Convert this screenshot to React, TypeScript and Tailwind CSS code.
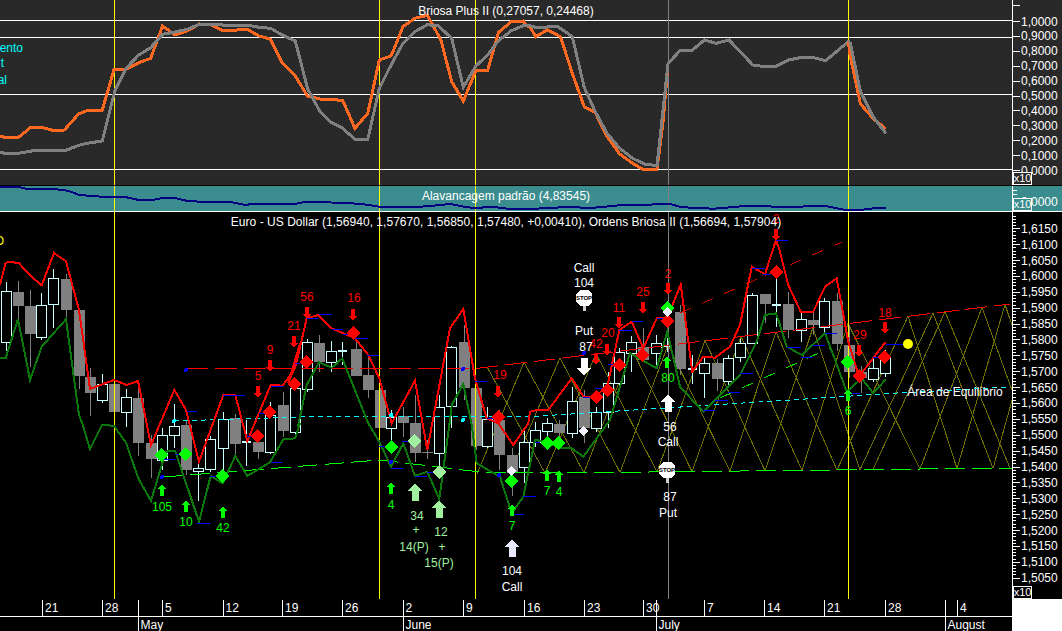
import React from "react";

type Pt = [number, number];

// points were read off 3x crops, so convert back to page coords
const at = (ox: number, oy: number, pts: Pt[], sx = 3) =>
  pts.map(([x, y]) => `${(ox + x / sx).toFixed(1)},${(oy + y / 3).toFixed(1)}`).join(" ");

const TS = 2.953;

const orange =
  at(0, 0, [[0, 410], [20, 412], [55, 412], [92, 381], [120, 381], [155, 391], [190, 390], [232, 342], [262, 330], [302, 330], [337, 208], [372, 208], [410, 188], [445, 175], [480, 78], [517, 105], [553, 92], [590, 72], [625, 75], [660, 93], [700, 90], [730, 88], [765, 108], [798, 117], [833, 188], [870, 225], [908, 288], [945, 297], [1012, 301], [1048, 385], [1086, 340], [1120, 180], [1155, 168], [1190, 80], [1225, 55], [1262, 46], [1302, 120], [1334, 245], [1368, 303], [1405, 212], [1440, 212], [1472, 97], [1510, 65], [1545, 63]], TS) +
  " " +
  at(531, 0, [[-20, 70], [0, 85], [14, 110], [48, 90], [87, 110], [122, 220], [157, 320], [190, 338], [225, 410], [262, 462], [300, 490], [330, 508], [372, 508], [390, 365], [405, 190]], TS);

const orangeEnd = at(531, 0, [[937, 125], [942, 165], [973, 312], [1010, 355], [1048, 387]], TS);

const gray =
  at(0, 0, [[0, 458], [20, 460], [55, 460], [105, 451], [195, 451], [232, 436], [262, 429], [302, 423], [340, 270], [372, 205], [410, 165], [445, 143], [480, 103], [517, 96], [553, 88], [590, 72], [655, 72], [660, 77], [740, 77], [765, 82], [800, 85], [833, 105], [872, 123], [908, 265], [945, 335], [977, 366], [1012, 385], [1048, 418], [1086, 418], [1120, 265], [1155, 195], [1190, 130], [1225, 95], [1262, 74], [1295, 78], [1334, 115], [1368, 262], [1405, 198], [1440, 165], [1472, 122], [1510, 92], [1545, 77]], TS) +
  " " +
  at(531, 0, [[0, 78], [14, 82], [80, 80], [122, 110], [157, 262], [190, 335], [225, 400], [262, 445], [300, 475], [335, 492], [372, 497], [405, 190], [442, 150], [477, 150], [512, 120], [547, 130], [585, 120], [655, 195], [690, 200], [722, 200], [760, 180], [800, 172], [830, 172], [870, 182], [937, 125], [973, 275], [1010, 350], [1048, 400]], TS);

const leverage =
  at(0, 0, [[0, 560], [60, 562], [80, 567], [165, 568], [200, 572], [235, 585], [300, 590], [370, 591], [410, 600], [445, 601], [480, 594], [515, 594], [550, 602], [590, 605], [675, 605], [720, 614], [770, 612], [875, 611], [905, 605], [940, 606], [1040, 610], [1085, 614], [1120, 620], [1220, 622], [1270, 618], [1330, 612], [1370, 620], [1405, 625], [1430, 622], [1465, 622], [1500, 626]], TS) +
  " " +
  at(531, 0, [[0, 627], [60, 623], [130, 621], [165, 625], [200, 622], [270, 615], [330, 616], [375, 612], [410, 612], [440, 620], [470, 623], [540, 626], [590, 622], [630, 618], [680, 618], [750, 622], [780, 620], [870, 618], [900, 624], [930, 630], [980, 630], [990, 626], [1048, 624]], TS);

const redLine =
  at(0, 215, [[0, 210], [17, 143], [35, 141], [57, 145], [92, 183], [125, 211], [162, 114], [198, 139], [237, 285], [270, 522], [342, 495], [380, 510], [414, 498], [453, 690], [523, 525], [558, 585], [597, 740], [670, 540], [706, 540], [742, 678], [812, 510], [848, 512], [885, 460], [900, 385]]) +
  " " +
  at(280, 215, [[25, 505], [50, 440], [80, 310], [115, 300], [155, 340], [190, 355], [225, 370], [265, 420], [298, 490], [335, 625], [405, 497], [442, 705], [510, 340], [550, 282], [585, 490], [620, 610], [655, 625], [700, 690], [745, 625]]) +
  " " +
  at(530, 215, [[0, 590], [20, 585], [55, 585], [125, 490], [162, 547], [197, 545], [233, 510], [268, 345], [305, 320], [340, 400], [380, 310], [412, 310], [452, 208], [487, 470], [520, 425], [555, 428], [600, 395], [630, 330], [665, 155], [705, 178], [738, 75]]) +
  " " +
  at(780, 215, [[0, 110], [25, 210], [62, 290], [100, 290], [135, 215], [170, 190], [205, 380], [237, 485], [317, 380]]);

const greenLine =
  at(0, 215, [[0, 429], [17, 429], [54, 312], [90, 495], [125, 395], [198, 313], [237, 600]]) +
  " " +
  at(0, 420, [[247, 10], [270, 88], [307, 14], [342, 18], [378, 68], [415, 175], [453, 243], [497, 95], [525, 92], [597, 305], [632, 168], [668, 190], [706, 108], [742, 168], [810, 127], [850, 58], [885, 55], [900, 10]]) +
  " " +
  at(280, 215, [[55, 630], [80, 510], [117, 442], [155, 458], [187, 430], [265, 625]]) +
  " " +
  at(280, 420, [[298, 65], [333, 140], [370, 70], [405, 168], [442, 155], [478, 237], [510, 0]]) +
  " " +
  at(280, 215, [[515, 570], [550, 507], [575, 630]]) +
  " " +
  at(280, 420, [[590, 130], [660, 170], [695, 280], [730, 230], [765, 60], [800, 65], [838, 85], [875, 85]]) +
  " " +
  at(560, 420, [[70, 110], [150, 0]]) +
  " " +
  at(530, 215, [[300, 415], [380, 460], [412, 350], [450, 515], [520, 590], [630, 480], [680, 380], [705, 300], [738, 295]]) +
  " " +
  at(780, 215, [[0, 330], [20, 395], [65, 420], [135, 355], [160, 420], [200, 530], [245, 490], [280, 535], [317, 493]]);

// x, body top, body bottom, wick top, wick bottom, kind
const candles: [number, number, number, number, number, "w" | "g" | "d"][] = [
  [6, 291, 342, 282, 351, "w"], [18, 292, 306, 281, 320, "g"], [30, 306, 334, 290, 367, "g"], [41, 305, 337, 293, 340, "w"],
  [53, 278, 304, 269, 328, "w"], [66, 279, 310, 274, 319, "g"], [79, 310, 376, 310, 389, "g"], [90, 377, 393, 368, 416, "g"],
  [102, 384, 400, 374, 403, "w"], [114, 384, 412, 384, 412, "g"], [126, 397, 412, 389, 427, "w"], [138, 398, 443, 389, 456, "g"],
  [151, 443, 459, 435, 478, "g"], [162, 435, 460, 428, 470, "w"], [174, 426, 435, 404, 448, "w"], [186, 425, 470, 420, 475, "g"],
  [198, 468, 471, 457, 501, "w"], [210, 439, 469, 436, 472, "w"], [223, 419, 448, 412, 472, "w"], [235, 418, 444, 414, 457, "g"],
  [246, 441, 443, 420, 466, "d"], [258, 442, 452, 430, 459, "g"], [270, 415, 452, 402, 454, "w"], [283, 405, 431, 392, 437, "g"],
  [295, 388, 432, 380, 435, "w"], [307, 342, 389, 339, 392, "w"], [319, 343, 362, 335, 372, "g"], [331, 351, 362, 341, 372, "w"],
  [342, 350, 351, 342, 365, "d"], [356, 349, 376, 338, 376, "g"], [368, 375, 390, 355, 398, "g"], [380, 390, 428, 388, 428, "g"],
  [391, 417, 428, 410, 440, "w"], [403, 416, 423, 407, 437, "g"], [415, 423, 453, 395, 462, "g"], [427, 452, 453, 440, 459, "g"],
  [439, 407, 453, 395, 472, "w"], [451, 347, 406, 346, 428, "w"], [464, 342, 388, 325, 400, "g"], [476, 388, 446, 388, 450, "g"],
  [487, 419, 446, 407, 448, "w"], [499, 420, 455, 410, 470, "g"], [512, 455, 473, 448, 496, "g"], [524, 442, 467, 430, 483, "w"],
  [535, 430, 442, 422, 447, "w"], [547, 423, 431, 418, 440, "w"], [559, 424, 433, 420, 437, "g"], [572, 401, 433, 387, 438, "w"],
  [584, 397, 428, 390, 443, "g"], [596, 412, 428, 407, 432, "w"], [608, 383, 412, 372, 428, "w"], [619, 352, 383, 348, 388, "w"],
  [631, 342, 353, 336, 372, "w"], [643, 347, 360, 328, 362, "g"], [656, 343, 353, 335, 365, "w"], [667, 345, 346, 338, 352, "d"],
  [680, 312, 369, 305, 375, "g"], [692, 368, 369, 355, 384, "d"], [704, 363, 373, 357, 398, "w"], [717, 363, 379, 359, 391, "g"],
  [728, 358, 381, 355, 386, "w"], [740, 343, 357, 339, 362, "w"], [752, 295, 343, 293, 343, "w"], [765, 294, 304, 294, 323, "g"],
  [776, 304, 305, 268, 327, "d"], [788, 304, 330, 292, 338, "g"], [801, 319, 330, 312, 342, "w"], [813, 320, 325, 312, 335, "g"],
  [824, 301, 327, 298, 335, "w"], [837, 301, 344, 293, 351, "g"], [849, 345, 372, 325, 378, "g"], [861, 372, 378, 366, 393, "g"],
  [873, 368, 379, 357, 382, "w"], [885, 358, 373, 350, 377, "w"],
];

// short blue stop marks: x1, x2, y in page coords
const blueMarks: [number, number, number][] = [
  [187, 197, 411], [223, 245, 395], [259, 264, 413], [271, 283, 386], [295, 300, 363],
  [163, 175, 459], [175, 180, 454], [197, 210, 523], [210, 217, 476], [247, 252, 436], [271, 282, 462],
  [307, 318, 318], [319, 332, 314], [332, 343, 329], [343, 350, 334], [355, 368, 338], [367, 379, 355],
  [475, 487, 381], [487, 493, 418], [379, 385, 446], [391, 403, 468], [402, 408, 441], [415, 427, 476], [427, 433, 472],
  [513, 524, 514], [523, 536, 496], [535, 540, 442], [583, 590, 397], [595, 602, 388], [608, 613, 364], [619, 632, 330],
  [632, 643, 321], [657, 663, 318], [703, 715, 410], [715, 728, 400], [728, 740, 392], [740, 753, 373], [752, 765, 268],
  [763, 770, 274], [776, 788, 240], [787, 801, 347], [801, 813, 357], [813, 825, 345], [825, 837, 333], [848, 860, 393],
  [873, 885, 357], [886, 904, 344],
];

const redDiamonds: Pt[] = [[257, 436], [269, 412], [294, 384], [306, 362], [353, 333], [498, 417], [596, 397], [607, 390], [619, 365], [642, 355], [667, 321], [776, 272], [859, 376], [884, 357]];
const greenDiamonds: Pt[] = [[161, 455], [185, 454], [222, 476], [391, 447], [511, 481], [547, 443], [558, 443], [667, 308], [847, 362]];
const paleDiamonds: Pt[] = [[414, 441], [439, 472]];
const whiteDiamonds: Pt[] = [[511, 471], [583, 431], [667, 312]];

// label x, label y, arrow x, arrow y, text
const redSignals: [number, number, number, number, string][] = [
  [258, 375, 258, 392, "5"], [270, 349, 270, 366, "9"], [294, 325, 294, 342, "21"], [307, 296, 307, 313, "56"],
  [354, 297, 353, 315, "16"], [500, 374, 498, 392, "19"], [596, 343, 596, 359, "42"], [608, 332, 607, 350, "20"],
  [619, 307, 619, 323, "11"], [643, 291, 643, 308, "25"], [668, 273, 668, 289, "2"], [776, 218, 776, 235, "2"],
  [860, 334, 859, 351, "29"], [885, 312, 885, 328, "18"],
];

const greenSignals: [number, number, number, number, string][] = [
  [162, 506, 162, 490, "105"], [186, 521, 186, 506, "10"], [223, 527, 223, 512, "42"], [391, 504, 391, 488, "4"],
  [512, 525, 512, 510, "7"], [547, 490, 547, 475, "7"], [559, 491, 559, 476, "4"], [668, 377, 667, 362, "80"], [848, 410, 848, 395, "6"],
];

const whiteLabels: [number, number, string][] = [
  [512, 570, "104"], [512, 586, "Call"], [584, 267, "Call"], [584, 282, "104"], [584, 330, "Put"], [586, 346, "87"],
  [670, 426, "56"], [668, 441, "Call"], [670, 496, "87"], [668, 512, "Put"],
];

const paleLabels: [number, number, string][] = [
  [417, 515, "34"], [416, 529, "+"], [414, 546, "14(P)"], [441, 531, "12"], [442, 546, "+"], [439, 562, "15(P)"],
];

// lattice runs between the two trend lines
const top = (x: number) => 368 - 0.12 * (x - 476);
const bottom = (x: number) => 473 - 0.011 * (x - 560);
const zig = (xs: number[], firstIsPeak: boolean) =>
  xs.map((x, i) => `${x},${(i % 2 === 0) === firstIsPeak ? top(x) : bottom(x)}`).join(" ");

const lattices = [
  zig([477, 524, 584, 632, 692, 741, 802, 848, 920, 982, 1040], false),
  zig([510, 560, 620, 668, 730, 776, 837, 908, 957, 1005, 1060], false),
  zig([487, 545, 596, 657, 705, 765, 813, 860, 933, 993, 1040], true),
  zig([873, 945, 1010], false),
];

function Diamond({ x, y, fill, r = 7 }: { x: number; y: number; fill: string; r?: number }) {
  return <polygon points={`${x},${y - r} ${x + r},${y} ${x},${y + r} ${x - r},${y}`} fill={fill} />;
}

function Arrow({ x, y, up, fill, big }: { x: number; y: number; up: boolean; fill: string; big?: boolean }) {
  const head = big ? 7.5 : 4.5;
  const shaft = big ? 3.5 : 2;
  const len = big ? 18 : 12;
  const d = up ? 1 : -1;
  const t = y - (d * len) / 2;
  const b = y + (d * len) / 2;
  const n = t + d * (big ? 8 : 5);
  return <polygon points={`${x},${t} ${x + head},${n} ${x + shaft},${n} ${x + shaft},${b} ${x - shaft},${b} ${x - shaft},${n} ${x - head},${n}`} fill={fill} />;
}

function Tag({ x, y, fill, children }: { x: number; y: number; fill: string; children: React.ReactNode }) {
  return (
    <text x={x} y={y + 4.5} fill={fill} fontSize={12} textAnchor="middle">
      {children}
    </text>
  );
}

function Stop({ x, y }: { x: number; y: number }) {
  return (
    <g>
      <rect x={x - 1} y={y + 6} width={3} height={7} fill="#d0d0d0" />
      <polygon points={`${x - 4},${y - 8} ${x + 4},${y - 8} ${x + 8},${y - 4} ${x + 8},${y + 4} ${x + 4},${y + 8} ${x - 4},${y + 8} ${x - 8},${y + 4} ${x - 8},${y - 4}`} fill="#ffffff" />
      <text x={x} y={y + 2} fontSize={6} fontWeight={700} textAnchor="middle" fill="#000000">
        STOP
      </text>
    </g>
  );
}

function VLines({ y1, y2 }: { y1: number; y2: number }) {
  return (
    <g>
      {[114.5, 379.5, 475.5, 848.5].map((x) => (
        <line key={x} x1={x} x2={x} y1={y1} y2={y2} stroke="#ffff00" />
      ))}
      <line x1={668.5} x2={668.5} y1={y1} y2={y2} stroke="#808080" />
    </g>
  );
}

function X10({ className }: { className: string }) {
  return <div className={`absolute left-px flex h-[13px] w-[19px] items-center justify-center border border-white text-[11px] leading-none text-white ${className}`}>x10</div>;
}

function BriosaPanel() {
  const levels = [20.5, 37.5, 94.5, 169.5];
  const labels = ["1,0000", "0,9000", "0,8000", "0,7000", "0,6000", "0,5000", "0,4000", "0,3000", "0,2000", "0,1000", "0,0000"];
  return (
    <div className="flex h-[185px] bg-[#292929]">
      <svg className="h-full w-[1012px]" viewBox="0 0 1012 185" shapeRendering="crispEdges">
        {levels.map((y) => (
          <line key={y} x1={0} x2={1012} y1={y} y2={y} stroke="#ffffff" />
        ))}
        <VLines y1={0} y2={185} />
        <polyline points={orange} fill="none" stroke="#ff6820" strokeWidth={3} />
        <polyline points={gray} fill="none" stroke="#808080" strokeWidth={3} />
        <polyline points={orangeEnd} fill="none" stroke="#ff6820" strokeWidth={3} />
        <polyline points={at(531, 0, [[942, 125], [973, 275], [1010, 350], [1048, 400]], TS)} fill="none" stroke="#808080" strokeWidth={3} />
        <text x={506} y={15} fill="#ffffff" fontSize={12} textAnchor="middle">Briosa Plus II (0,27057, 0,24468)</text>
        <text x={23} y={52} fill="#00ffff" fontSize={12} textAnchor="end">Movimento</text>
        <text x={4} y={67} fill="#00ffff" fontSize={12} textAnchor="end">t</text>
        <text x={7} y={84} fill="#00ffff" fontSize={12} textAnchor="end">al</text>
      </svg>
      <div className="relative w-[50px]">
        <svg className="h-full w-full" viewBox="1012 0 50 185" shapeRendering="crispEdges">
          <line x1={1012.5} x2={1012.5} y1={0} y2={185} stroke="#ffffff" />
          <line x1={1012} x2={1020} y1={5.5} y2={5.5} stroke="#ffffff" />
          {labels.map((l, i) => {
            const y = 21 + i * 14.9;
            return (
              <g key={l}>
                <line x1={1012} x2={1020} y1={Math.round(y) + 0.5} y2={Math.round(y) + 0.5} stroke="#ffffff" />
                <text x={1021} y={y + 4.5} fill="#ffffff" fontSize={12}>{l}</text>
              </g>
            );
          })}
        </svg>
        <X10 className="bottom-0 bg-[#292929]" />
      </div>
    </div>
  );
}

function LeveragePanel() {
  return (
    <div className="flex h-[25px] bg-[#3a8c8e]">
      <svg className="h-full w-[1012px]" viewBox="0 186 1012 25" shapeRendering="crispEdges">
        <VLines y1={186} y2={211} />
        <polyline points={leverage} fill="none" stroke="#000080" strokeWidth={2} />
        <text x={506} y={200} fill="#ffffff" fontSize={12} textAnchor="middle">Alavancagem padrão (4,83545)</text>
      </svg>
      <div className="relative w-[50px]">
        <svg className="h-full w-full" viewBox="1012 186 50 25" shapeRendering="crispEdges">
          <line x1={1012.5} x2={1012.5} y1={186} y2={211} stroke="#ffffff" />
          {[190.5, 194.5, 199.5, 203.5].map((y) => (
            <line key={y} x1={1012} x2={1017} y1={y} y2={y} stroke="#ffffff" />
          ))}
          <text x={1021} y={206} fill="#ffffff" fontSize={12}>0,0000</text>
        </svg>
        <X10 className="bottom-0 bg-[#3a8c8e]" />
      </div>
    </div>
  );
}

function PriceChart() {
  return (
    <svg className="h-full w-[1012px]" viewBox="0 212 1012 387" shapeRendering="crispEdges">
      {lattices.map((p, i) => (
        <polyline key={i} points={p} fill="none" stroke="#707000" />
      ))}
      {candles.map(([x, t, b, wt, wb, kind]) => (
        <g key={x}>
          <line x1={x + 0.5} x2={x + 0.5} y1={wt} y2={wb} stroke={kind === "g" ? "#808080" : "#c8ffff"} />
          {kind === "g" && <rect x={x - 5} y={t} width={11} height={b - t} fill="#808080" />}
          {kind === "w" && <rect x={x - 4.5} y={t + 0.5} width={10} height={b - t} fill="#000000" stroke="#c8ffff" />}
          {kind === "d" && <rect x={x - 4} y={t} width={9} height={2} fill="#c8ffff" />}
        </g>
      ))}
      <VLines y1={212} y2={599} />

      <polyline points="186,368.5 476,368.5 1010,304" fill="none" stroke="#ff0000" strokeDasharray="22 7" />
      <polyline points="680,313 842,242" fill="none" stroke="#c00000" strokeDasharray="12 12" />
      <polyline points="163,477 380,460 480,472 560,473 1012,468" fill="none" stroke="#00ff00" strokeDasharray="20 7" />
      <polyline points="174,421 300,417 540,416 790,400 897,393 1010,387" fill="none" stroke="#00ffff" strokeDasharray="5 4" />
      <polyline points="720,398 830,348" fill="none" stroke="#00e000" strokeDasharray="12 12" />

      <polyline points={greenLine} fill="none" stroke="#0a780a" strokeWidth={2} />
      <polyline points={redLine} fill="none" stroke="#ff0000" strokeWidth={2} />

      {blueMarks.map(([a, b, y], i) => (
        <line key={i} x1={a} x2={b} y1={y + 0.5} y2={y + 0.5} stroke="#0000ff" />
      ))}
      {[[186, 370], [162, 477], [463, 369], [391, 462], [499, 475], [584, 353]].map(([x, y]) => (
        <circle key={x} cx={x} cy={y} r={2} fill="#0000ff" />
      ))}
      {[[174, 421], [391, 415], [463, 420]].map(([x, y]) => (
        <circle key={x} cx={x} cy={y} r={2} fill="#00ffff" />
      ))}

      {redDiamonds.map(([x, y], i) => <Diamond key={i} x={x} y={y} fill="#ff0000" />)}
      {greenDiamonds.map(([x, y], i) => <Diamond key={i} x={x} y={y} fill="#00ff00" />)}
      {paleDiamonds.map(([x, y], i) => <Diamond key={i} x={x} y={y} fill="#a0f0a0" />)}
      {whiteDiamonds.map(([x, y], i) => <Diamond key={i} x={x} y={y} fill="#f0f0ff" r={5} />)}
      <circle cx={908} cy={344} r={5} fill="#ffff00" shapeRendering="geometricPrecision" />

      {redSignals.map(([tx, ty, ax, ay, s], i) => (
        <g key={i}>
          <Tag x={tx} y={ty} fill="#ff0000">{s}</Tag>
          <Arrow x={ax} y={ay} up={false} fill="#ff0000" />
        </g>
      ))}
      {greenSignals.map(([tx, ty, ax, ay, s], i) => (
        <g key={i}>
          <Arrow x={ax} y={ay} up fill="#00ff00" />
          <Tag x={tx} y={ty} fill="#00ff00">{s}</Tag>
        </g>
      ))}
      <Arrow x={415} y={492} up fill="#a0f0a0" big />
      <Arrow x={439} y={509} up fill="#a0f0a0" big />
      <Arrow x={512} y={548} up fill="#e8e8ff" big />
      <Arrow x={584} y={367} up={false} fill="#ffffff" big />
      <Arrow x={668} y={403} up fill="#ffffff" big />
      <Stop x={584} y={298} />
      <Stop x={667} y={470} />
      {whiteLabels.map(([x, y, s], i) => <Tag key={i} x={x} y={y} fill="#ffffff">{s}</Tag>)}
      {paleLabels.map(([x, y, s], i) => <Tag key={i} x={x} y={y} fill="#a0f0a0">{s}</Tag>)}

      <text x={955} y={396} fill="#ffffff" fontSize={12} textAnchor="middle">Área de Equilíbrio</text>
      <text x={506} y={226} fill="#ffffff" fontSize={12} letterSpacing={0.03} textAnchor="middle">Euro - US Dollar (1,56940, 1,57670, 1,56850, 1,57480, +0,00410), Ordens Briosa II (1,56694, 1,57904)</text>
      <text x={4} y={245} fill="#ffff00" fontSize={12} textAnchor="end">O</text>
    </svg>
  );
}

function PriceAxis() {
  const ticks = Array.from({ length: 115 }, (_, i) => 215.6 + i * 3.176);
  const labels = Array.from({ length: 23 }, (_, i) => ({
    y: 228.3 + i * 15.88,
    text: "1," + (6150 - i * 50),
  }));
  return (
    <div className="relative w-[50px]">
      <svg className="h-full w-full" viewBox="1012 212 50 387" shapeRendering="crispEdges">
        <line x1={1012.5} x2={1012.5} y1={212} y2={599} stroke="#ffffff" />
        {ticks.map((y) => (
          <line key={y} x1={1012} x2={1016} y1={Math.round(y) + 0.5} y2={Math.round(y) + 0.5} stroke="#ffffff" />
        ))}
        {labels.map((l) => (
          <g key={l.text}>
            <line x1={1012} x2={1020} y1={Math.round(l.y) + 0.5} y2={Math.round(l.y) + 0.5} stroke="#ffffff" />
            <text x={1021} y={l.y + 4.5} fill="#ffffff" fontSize={12}>{l.text}</text>
          </g>
        ))}
      </svg>
      <X10 className="bottom-0 bg-black" />
    </div>
  );
}

function DateAxis() {
  const weeks: [number, string][] = [
    [42.5, "21"], [102.5, "28"], [162.5, "5"], [223, "12"], [282.5, "19"], [342.5, "26"], [403, "2"], [463.5, "9"],
    [524.5, "16"], [584.5, "23"], [643.5, "30"], [704.5, "7"], [764.5, "14"], [824.5, "21"], [885.5, "28"], [957.5, "4"],
  ];
  const months: [number, string][] = [[138.5, "May"], [403.5, "June"], [656.5, "July"], [945.5, "August"]];
  return (
    <div className="flex h-[32px]">
      <svg className="h-full w-[1012px]" viewBox="0 599 1012 32" shapeRendering="crispEdges">
        <line x1={0} x2={1012} y1={616.5} y2={616.5} stroke="#ffffff" />
        {weeks.map(([x, s]) => (
          <g key={x}>
            <line x1={x} x2={x} y1={600} y2={616} stroke="#ffffff" />
            <text x={x + 2.5} y={612} fill="#ffffff" fontSize={12}>{s}</text>
          </g>
        ))}
        {months.map(([x, s]) => (
          <g key={x}>
            <line x1={x} x2={x} y1={600} y2={631} stroke="#ffffff" />
            <text x={x + 2} y={629} fill="#ffffff" fontSize={12}>{s}</text>
          </g>
        ))}
      </svg>
      <div className="w-[50px] bg-white" />
    </div>
  );
}

export default function App() {
  return (
    <div className="flex h-[631px] w-[1062px] flex-col overflow-hidden bg-black font-['Liberation_Sans',Arial,sans-serif]">
      <BriosaPanel />
      <div className="h-px bg-black" />
      <LeveragePanel />
      <div className="h-px bg-white" />
      <div className="flex h-[387px]">
        <PriceChart />
        <PriceAxis />
      </div>
      <DateAxis />
    </div>
  );
}
